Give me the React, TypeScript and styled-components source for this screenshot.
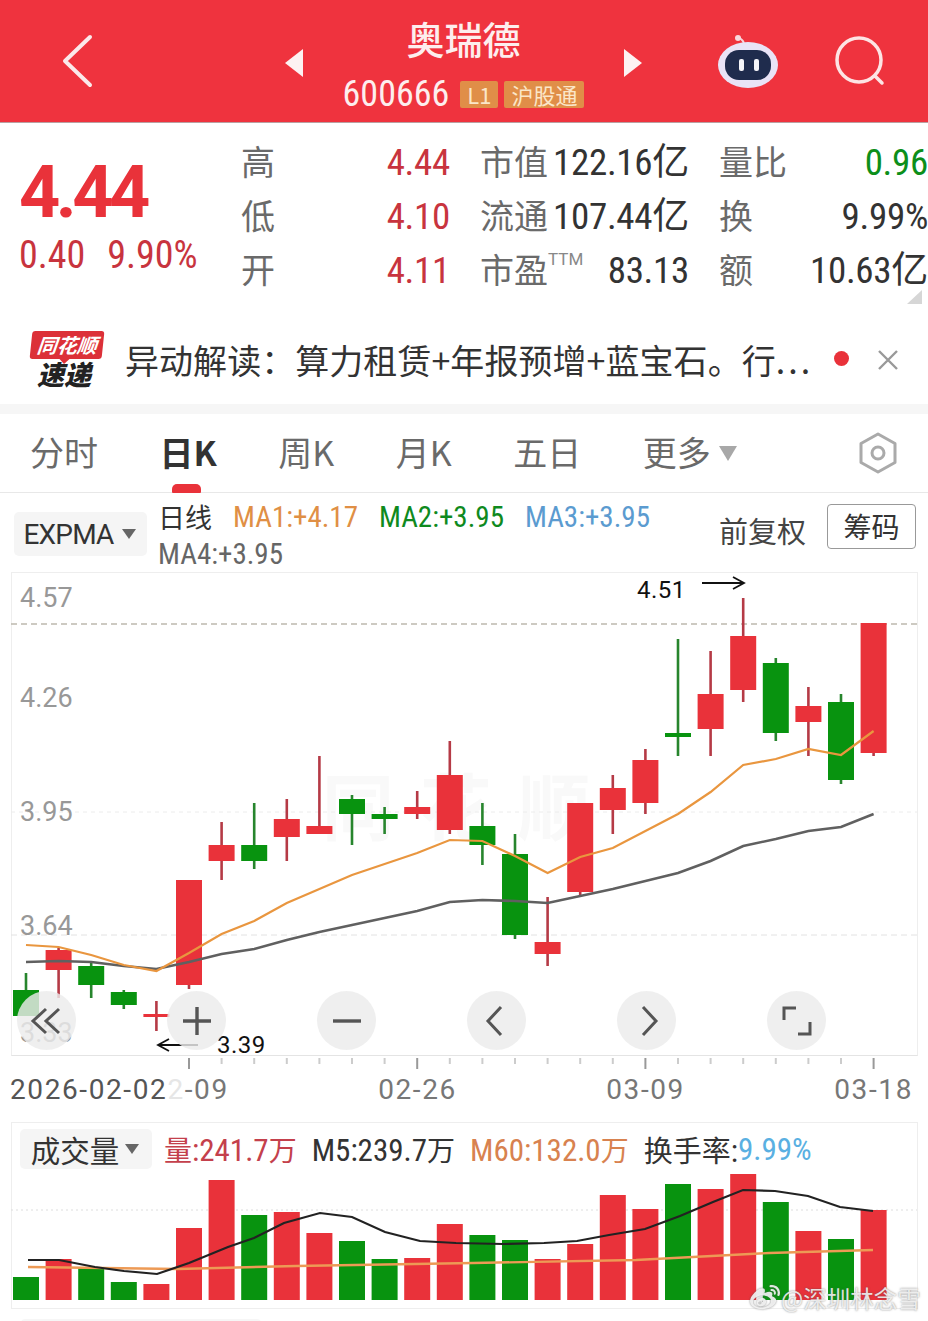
import React from 'react'
import styled, { createGlobalStyle } from 'styled-components'
import { FaWeibo } from 'react-icons/fa'

const CN = `"Noto Sans CJK SC", sans-serif`
const NUM = `Roboto, "Noto Sans CJK SC", sans-serif`

const RED = '#e9323a'
const GREEN = '#08930f'

// wickTop, bodyTop, bodyBottom, wickBottom
const candles: [number, number, number, number, 'r' | 'g'][] = [
    [973, 990, 1016, 1016, 'g'],
    [948, 950, 970, 998, 'r'],
    [963, 966, 985, 998, 'g'],
    [990, 992, 1005, 1009, 'g'],
    [1001, 1014, 1017, 1031, 'r'],
    [880, 880, 985, 989, 'r'],
    [822, 845, 861, 880, 'r'],
    [803, 845, 861, 869, 'g'],
    [799, 819, 837, 861, 'r'],
    [756, 826, 834, 834, 'r'],
    [795, 799, 814, 845, 'g'],
    [807, 814, 819, 834, 'g'],
    [791, 807, 814, 819, 'r'],
    [741, 775, 830, 834, 'r'],
    [803, 826, 845, 865, 'g'],
    [834, 854, 935, 939, 'g'],
    [897, 942, 954, 966, 'r'],
    [803, 803, 892, 896, 'r'],
    [775, 788, 810, 834, 'r'],
    [749, 760, 803, 814, 'r'],
    [639, 733, 737, 756, 'g'],
    [651, 694, 729, 756, 'r'],
    [598, 636, 690, 702, 'r'],
    [658, 663, 733, 741, 'g'],
    [687, 706, 722, 756, 'r'],
    [694, 702, 780, 784, 'g'],
    [623, 623, 753, 756, 'r'],
]

const ma1 = [945, 947, 955, 965, 971, 953, 934, 921, 903, 889, 875, 864, 853, 840, 841, 856, 873, 857, 848, 831, 814, 792, 765, 759, 749, 755, 731]
const ma2 = [962, 961, 962, 966, 969, 962, 954, 949, 940, 932, 925, 918, 911, 902, 900, 901, 903, 896, 889, 881, 873, 861, 846, 839, 831, 827, 814]

const volumes = [1277, 1259, 1267, 1282, 1284, 1228, 1180, 1215, 1212, 1233, 1241, 1259, 1258, 1224, 1235, 1240, 1259, 1244, 1195, 1209, 1184, 1189, 1174, 1202, 1231, 1239, 1210]

const m5 = '28,1260 59,1260 95,1267 124,1271 157,1274 189,1263 228,1247 254,1238 284,1223 320,1213 352,1217 385,1232 420,1241 456,1243 503,1244 544,1243 577,1241 609,1235 645,1229 680,1216 713,1202 743,1190 775,1191 808,1196 840,1207 873,1211'
const m60 = '28,1267 178,1269 296,1266 473,1263 636,1260 769,1253 873,1250'

const xAt = (i: number) => 26 + i * 32.6
const toPoints = (ys: number[]) => ys.map((y, i) => `${xAt(i)},${y}`).join(' ')

const prices = [
    { text: '4.57', top: 10 },
    { text: '4.26', top: 110 },
    { text: '3.95', top: 224 },
    { text: '3.64', top: 338 },
    { text: '3.33', top: 445 },
]

const stats = [
    { label: '高', value: '4.44', tone: '#c8343e' },
    { label: '市值', value: '122.16亿' },
    { label: '量比', value: '0.96', tone: '#0c8f1a' },
    { label: '低', value: '4.10', tone: '#c8343e' },
    { label: '流通', value: '107.44亿' },
    { label: '换', value: '9.99%' },
    { label: '开', value: '4.11', tone: '#c8343e' },
    { label: '市盈', sup: 'TTM', value: '83.13' },
    { label: '额', value: '10.63亿' },
]

const Global = createGlobalStyle`
    html, body {
        margin: 0;
        padding: 0;
        background: #fff;
    }
    * {
        box-sizing: border-box;
    }
`

const Page = styled.div`
    width: 928px;
    height: 1321px;
    overflow: hidden;
    position: relative;
    background: #fff;
    font-family: ${CN};
`

const Header = styled.header`
    height: 123px;
    background: #ef333e;
    border-bottom: 1px solid #b9a0a2;
    display: flex;
    align-items: center;
    padding-left: 62px;
    color: #fdeeee;
`

const BackIcon = styled.svg`
    width: 32px;
    height: 54px;
    margin-right: 191px;
`

const Triangle = styled.div<{ $right?: boolean }>`
    width: 0;
    height: 0;
    margin-top: 3px;
    border-top: 14px solid transparent;
    border-bottom: 14px solid transparent;
    ${(p) => (p.$right ? 'border-left: 18px solid #fdf2f2;' : 'border-right: 18px solid #fdf2f2;')}
`

const HeaderCenter = styled.div`
    width: 321px;
    display: flex;
    flex-direction: column;
    align-items: center;
`

const Title = styled.div`
    font-size: 38px;
    line-height: 44px;
    font-weight: 500;
    margin-top: 2px;
`

const CodeRow = styled.div`
    display: flex;
    align-items: center;
    gap: 6px;
    margin-top: 20px;
    height: 28px;
`

const Code = styled.span`
    font-family: ${NUM};
    font-stretch: 75%;
    font-size: 36px;
    line-height: 28px;
    margin-right: 5px;
`

const Badge = styled.span`
    background: #e08e48;
    color: #fbe6c8;
    font-size: 22px;
    line-height: 27px;
    height: 27px;
    padding: 0 7px;
    border-radius: 2px;
`

const RobotIcon = styled.svg`
    width: 62px;
    height: 56px;
    margin-left: 75px;
    margin-top: 1px;
`

const SearchIcon = styled.svg`
    width: 56px;
    height: 56px;
    margin-left: 53px;
`

const Quote = styled.section`
    height: 200px;
    display: flex;
    position: relative;
`

const PriceCol = styled.div`
    width: 241px;
    padding: 31px 0 0 19px;
`

const BigPrice = styled.div`
    font-family: Roboto, sans-serif;
    font-weight: 700;
    font-size: 72px;
    line-height: 78px;
    letter-spacing: -4.5px;
    color: ${RED};
`

const Change = styled.div`
    display: flex;
    gap: 22px;
    margin-top: 1px;
    font-family: ${NUM};
    font-stretch: 75%;
    font-size: 38px;
    line-height: 44px;
    color: #c8343e;
`

const StatGrid = styled.div`
    display: grid;
    grid-template-columns: repeat(3, 207px);
    grid-auto-rows: 54px;
    column-gap: 32px;
    padding-top: 11px;
`

const Stat = styled.div`
    display: flex;
    justify-content: space-between;
    align-items: center;
    white-space: nowrap;
`

const StatLabel = styled.span`
    font-size: 34px;
    color: #6a6a6a;
    display: flex;
    align-items: flex-start;
    line-height: 44px;
`

const Sup = styled.span`
    font-family: Roboto, sans-serif;
    font-size: 17px;
    line-height: 24px;
    color: #888;
`

const StatValue = styled.span<{ $tone?: string }>`
    font-family: ${NUM};
    font-stretch: 75%;
    font-size: 37px;
    line-height: 44px;
    letter-spacing: -0.3px;
    margin: 4px -2px 0 0;
    color: ${(p) => p.$tone || '#333'};
`

const Corner = styled.div`
    position: absolute;
    left: 907px;
    top: 167px;
    width: 15px;
    height: 14px;
    background: #d6d6d6;
    clip-path: polygon(100% 0, 100% 100%, 0 100%);
`

const News = styled.section`
    height: 81px;
    display: flex;
    align-items: center;
    padding-left: 30px;
    padding-bottom: 7px;
`

const Logo = styled.div`
    width: 74px;
    display: flex;
    flex-direction: column;
    align-items: center;
`

const LogoBubble = styled.div`
    position: relative;
    width: 72px;
    height: 28px;
    background: #dc3038;
    border-radius: 3px;
    transform: skewX(-6deg);
    color: #fff;
    font-size: 20px;
    line-height: 28px;
    font-weight: 700;
    font-style: italic;
    text-align: center;
    white-space: nowrap;
    &::after {
        content: '';
        position: absolute;
        left: 30px;
        bottom: -5px;
        border-left: 5px solid transparent;
        border-right: 5px solid transparent;
        border-top: 5px solid #dc3038;
    }
`

const LogoText = styled.div`
    font-size: 27px;
    line-height: 30px;
    font-weight: 900;
    font-style: italic;
    color: #222;
    margin-right: 6px;
`

const NewsText = styled.div`
    width: 690px;
    margin-left: 21px;
    font-size: 34px;
    line-height: 44px;
    color: #333;
    white-space: nowrap;
    letter-spacing: 0.05px;
`

const Ellipsis = styled.span`
    letter-spacing: 3px;
`

const Dot = styled.div`
    width: 15px;
    height: 15px;
    border-radius: 50%;
    background: ${RED};
    margin-left: 19px;
    margin-top: -3px;
`

const CloseIcon = styled.svg`
    width: 22px;
    height: 22px;
    margin-left: 28px;
`

const Strip = styled.div`
    height: 10px;
    background: #f6f6f6;
`

const Tabs = styled.nav`
    height: 79px;
    display: flex;
    gap: 61.5px;
    align-items: center;
    padding: 0 30px 0 30px;
    border-bottom: 1px solid #e8e8e8;
`

const Tab = styled.div<{ $active?: boolean }>`
    position: relative;
    font-size: 34px;
    line-height: 44px;
    margin-bottom: 2px;
    display: flex;
    align-items: center;
    gap: 5px;
    color: ${(p) => (p.$active ? '#333' : '#6a6a6a')};
    font-weight: ${(p) => (p.$active ? 700 : 400)};
    ${(p) =>
        p.$active &&
        `&::after {
            content: '';
            position: absolute;
            left: 12px;
            width: 29px;
            height: 9px;
            bottom: -19px;
            border-radius: 5px 5px 1px 1px;
            background: ${RED};
        }`}
`

const TabArrow = styled.span`
    width: 0;
    height: 0;
    margin: 3px 0 0 3px;
    border-left: 9px solid transparent;
    border-right: 9px solid transparent;
    border-top: 15px solid #a8a8a8;
`

const GearIcon = styled.svg`
    width: 42px;
    height: 42px;
    margin-left: auto;
    margin-right: -1px;
`

const IndicatorRow = styled.section`
    height: 79px;
    display: flex;
    padding-left: 14px;
`

const Chip = styled.div`
    display: flex;
    align-items: center;
    justify-content: center;
    gap: 8px;
    background: #f5f5f5;
    border-radius: 5px;
    color: #333;
`

const ExpmaChip = styled(Chip)`
    width: 133px;
    height: 44px;
    margin-top: 19px;
    font-family: Roboto, sans-serif;
    font-size: 28px;
    letter-spacing: -0.8px;
    padding-right: 2px;
`

const ChipArrow = styled.span`
    width: 0;
    height: 0;
    border-left: 7px solid transparent;
    border-right: 7px solid transparent;
    border-top: 10px solid #666;
`

const Legend = styled.div`
    width: 540px;
    margin-left: 13px;
    padding-top: 7px;
    display: flex;
    flex-wrap: wrap;
    column-gap: 21px;
    font-family: ${NUM};
    font-stretch: 75%;
    font-size: 29px;
    line-height: 34px;
`

const LegendItem = styled.span<{ $color: string }>`
    color: ${(p) => p.$color};
    position: relative;
    left: -2px;
`

const LegendBreak = styled.div`
    width: 100%;
`

const LegendCn = styled.span`
    font-family: ${CN};
    font-stretch: normal;
    font-size: 27px;
    color: #333;
    position: relative;
    left: -2px;
`

const Adjust = styled.div`
    margin-left: 19px;
    margin-top: 16px;
    font-size: 29px;
    line-height: 42px;
    color: #444;
    white-space: nowrap;
`

const ChipButton = styled.div`
    width: 89px;
    height: 45px;
    margin-left: 21px;
    margin-top: 11px;
    border: 1px solid #999;
    border-radius: 4px;
    font-size: 28px;
    line-height: 42px;
    text-align: center;
    color: #333;
`

const ChartPanel = styled.section`
    position: relative;
    width: 907px;
    height: 484px;
    margin-left: 11px;
    border: 1px solid #eee;
    border-bottom: 1px solid #e4e4e4;
`

const ChartSvg = styled.svg`
    display: block;
    position: absolute;
    left: -1px;
    top: -1px;
`

const PriceLabel = styled.span<{ $top: number }>`
    position: absolute;
    left: 8px;
    top: ${(p) => p.$top}px;
    font-family: Roboto, sans-serif;
    font-size: 27px;
    line-height: 30px;
    color: #989898;
`

const Extreme = styled.span<{ $left: number; $top: number }>`
    position: absolute;
    left: ${(p) => p.$left}px;
    top: ${(p) => p.$top}px;
    font-family: Roboto, sans-serif;
    font-size: 24px;
    line-height: 28px;
    letter-spacing: 0.5px;
    color: #111;
`

const Watermark = styled.span`
    position: absolute;
    left: 310px;
    top: 190px;
    font-size: 72px;
    line-height: 80px;
    letter-spacing: 26px;
    font-weight: 700;
    color: #f9f9f9;
    white-space: nowrap;
`

const ZoomBar = styled.div`
    position: absolute;
    left: 5px;
    top: 418px;
    display: flex;
    gap: 91px;
`

const ZoomButton = styled.div`
    width: 59px;
    height: 59px;
    border-radius: 50%;
    background: rgba(236, 236, 236, 0.82);
    display: flex;
    align-items: center;
    justify-content: center;
`

const ZoomIcon = styled.svg`
    width: 36px;
    height: 36px;
    fill: none;
    stroke: #555;
    stroke-width: 3;
`

const Axis = styled.div`
    height: 49px;
    position: relative;
`

const AxisTicks = styled.svg`
    display: block;
    position: absolute;
    left: 0;
    top: 0;
`

const AxisLabels = styled.div`
    display: flex;
    justify-content: space-between;
    padding: 18px 15px 0 10px;
    font-family: Roboto, sans-serif;
    font-size: 28px;
    line-height: 32px;
    letter-spacing: 1.6px;
    color: #777;
`

const AxisFirst = styled.span`
    color: #555;
`

const Faded = styled.span`
    color: #e6e6e6;
`

const AxisSecond = styled.span`
    color: #777;
`

const VolumePanel = styled.section`
    width: 907px;
    height: 187px;
    margin: 17px 0 0 11px;
    border: 1px solid #eee;
`

const VolumeHead = styled.div`
    display: flex;
    align-items: center;
    height: 47px;
    padding: 5px 0 0 8px;
    font-family: ${NUM};
    font-stretch: 75%;
    font-size: 31px;
    white-space: nowrap;
`

const VolumeChip = styled(Chip)`
    width: 132px;
    height: 40px;
    font-family: ${CN};
    font-stretch: normal;
    font-size: 29.5px;
    margin-right: 12px;
    gap: 6px;
    padding-right: 2px;
`

const VolumeItem = styled.span<{ $color: string; $gap?: number }>`
    color: ${(p) => p.$color};
    margin-right: ${(p) => p.$gap ?? 15}px;
`

const VolumeCn = styled.span`
    font-family: ${CN};
    font-stretch: normal;
    font-size: 28px;
`

const VolumeLabel = styled(VolumeCn)`
    font-size: 29px;
`

const VolumeSvg = styled.svg`
    display: block;
    margin-left: -1px;
`

const FootChip = styled.div`
    width: 240px;
    height: 6px;
    margin: 10px 0 0 21px;
    background: #f6f6f6;
    border-radius: 4px 4px 0 0;
`

const Credit = styled.div`
    position: absolute;
    left: 750px;
    top: 1281px;
    display: flex;
    align-items: center;
    gap: 1px;
    color: rgba(245, 245, 245, 0.9);
    font-size: 23.5px;
    line-height: 34px;
    text-shadow: 0 0 2px rgba(80, 80, 80, 0.7);
    white-space: nowrap;
    svg {
        filter: drop-shadow(0 0 1px rgba(80, 80, 80, 0.7));
    }
`

function ChartDrawing() {
    return (
        <ChartSvg width={907} height={484} viewBox="11 572 907 484">
            <line x1={11} x2={917} y1={624} y2={624} stroke="#bdb9ae" strokeWidth={1.5} strokeDasharray="6 4" />
            <line x1={11} x2={917} y1={812} y2={812} stroke="#ececec" strokeWidth={1} strokeDasharray="4 4" />
            <line x1={11} x2={917} y1={935} y2={935} stroke="#e2e2e2" strokeWidth={1} strokeDasharray="6 4" />
            {candles.map(([wt, bt, bb, wb, c], i) => (
                <g key={i}>
                    <line x1={xAt(i)} x2={xAt(i)} y1={wt} y2={wb} strokeWidth={2.6} stroke={c === 'r' ? '#b53a46' : '#27852d'} />
                    <rect x={xAt(i) - 13} y={bt} width={26} height={bb - bt} fill={c === 'r' ? RED : GREEN} />
                </g>
            ))}
            <polyline points={toPoints(ma2)} fill="none" stroke="#606060" strokeWidth={2.6} />
            <polyline points={toPoints(ma1)} fill="none" stroke="#e9963f" strokeWidth={2.2} />
            <path d="M702 583H744M733 577L744 583L733 589" fill="none" stroke="#111" strokeWidth={1.8} />
            <path d="M198 1045H158M169 1039L158 1045L169 1051" fill="none" stroke="#111" strokeWidth={1.8} />
        </ChartSvg>
    )
}

function AxisDrawing() {
    return (
        <AxisTicks width={928} height={14}>
            {candles.map((_, i) => {
                if (i < 5) return null
                const major = i === 5 || i === 12 || i === 19 || i === 26
                return (
                    <line key={i} x1={xAt(i)} x2={xAt(i)} y1={2} y2={major ? 13 : 8} stroke={major ? '#999' : '#ccc'} strokeWidth={2} />
                )
            })}
        </AxisTicks>
    )
}

function VolumeDrawing() {
    return (
        <VolumeSvg width={907} height={131} viewBox="11 1170 907 131">
            <line x1={11} x2={917} y1={1210} y2={1210} stroke="#ddd" strokeWidth={1} strokeDasharray="2 3" />
            {volumes.map((top, i) => (
                <rect key={i} x={xAt(i) - 13} y={top} width={26} height={1300 - top} fill={candles[i][4] === 'r' ? RED : GREEN} />
            ))}
            <polyline points={m60} fill="none" stroke="#ed9a55" strokeWidth={2.4} />
            <polyline points={m5} fill="none" stroke="#222" strokeWidth={2.2} />
        </VolumeSvg>
    )
}

export default function App() {
    return (
        <Page>
            <Global />
            <Header>
                <BackIcon viewBox="0 0 32 54">
                    <path d="M28 3L3 27L28 51" fill="none" stroke="#fbe9ea" strokeWidth={4} strokeLinecap="round" strokeLinejoin="round" />
                </BackIcon>
                <Triangle />
                <HeaderCenter>
                    <Title>奥瑞德</Title>
                    <CodeRow>
                        <Code>600666</Code>
                        <Badge>L1</Badge>
                        <Badge>沪股通</Badge>
                    </CodeRow>
                </HeaderCenter>
                <Triangle $right />
                <RobotIcon viewBox="0 0 62 56">
                    <path d="M27 9C25 5 23 4 21 4" fill="none" stroke="#f6d4dc" strokeWidth={2} />
                    <circle cx={21} cy={4} r={3} fill="#f8d9de" />
                    <ellipse cx={31} cy={31} rx={30} ry={23} fill="#e9e3f6" />
                    <rect x={8} y={16} width={46} height={30} rx={14} fill="#1f2c4d" />
                    <rect x={22} y={25} width={5} height={12} rx={2} fill="#f4f4f8" />
                    <rect x={37} y={25} width={5} height={12} rx={2} fill="#f4f4f8" />
                </RobotIcon>
                <SearchIcon viewBox="0 0 56 56">
                    <circle cx={27} cy={27} r={22} fill="none" stroke="#fde4e4" strokeWidth={3.5} />
                    <path d="M43 43L50 50" stroke="#fde4e4" strokeWidth={3.5} strokeLinecap="round" />
                </SearchIcon>
            </Header>

            <Quote>
                <PriceCol>
                    <BigPrice>4.44</BigPrice>
                    <Change>
                        <span>0.40</span>
                        <span>9.90%</span>
                    </Change>
                </PriceCol>
                <StatGrid>
                    {stats.map((s) => (
                        <Stat key={s.label}>
                            <StatLabel>
                                {s.label}
                                {s.sup && <Sup>{s.sup}</Sup>}
                            </StatLabel>
                            <StatValue $tone={s.tone}>{s.value}</StatValue>
                        </Stat>
                    ))}
                </StatGrid>
                <Corner />
            </Quote>

            <News>
                <Logo>
                    <LogoBubble>同花顺</LogoBubble>
                    <LogoText>速递</LogoText>
                </Logo>
                <NewsText>
                    异动解读：算力租赁+年报预增+蓝宝石。行<Ellipsis>...</Ellipsis>
                </NewsText>
                <Dot />
                <CloseIcon viewBox="0 0 22 22">
                    <path d="M2 2L20 20M20 2L2 20" stroke="#999" strokeWidth={2.4} />
                </CloseIcon>
            </News>
            <Strip />

            <Tabs>
                <Tab>分时</Tab>
                <Tab $active>日K</Tab>
                <Tab>周K</Tab>
                <Tab>月K</Tab>
                <Tab>五日</Tab>
                <Tab>
                    更多
                    <TabArrow />
                </Tab>
                <GearIcon viewBox="0 0 42 42">
                    <path d="M21 2L38 11.5V30.5L21 40L4 30.5V11.5Z" fill="none" stroke="#aaa" strokeWidth={3} strokeLinejoin="round" />
                    <circle cx={21} cy={21} r={6} fill="none" stroke="#aaa" strokeWidth={3} />
                </GearIcon>
            </Tabs>

            <IndicatorRow>
                <ExpmaChip>
                    EXPMA
                    <ChipArrow />
                </ExpmaChip>
                <Legend>
                    <LegendCn>日线</LegendCn>
                    <LegendItem $color="#e08f45">MA1:+4.17</LegendItem>
                    <LegendItem $color="#0f8a1e">MA2:+3.95</LegendItem>
                    <LegendItem $color="#5b9bd0">MA3:+3.95</LegendItem>
                    <LegendBreak />
                    <LegendItem $color="#666">MA4:+3.95</LegendItem>
                </Legend>
                <Adjust>前复权</Adjust>
                <ChipButton>筹码</ChipButton>
            </IndicatorRow>

            <ChartPanel>
                <Watermark>同花顺</Watermark>
                <ChartDrawing />
                {prices.map((p) => (
                    <PriceLabel key={p.text} $top={p.top}>
                        {p.text}
                    </PriceLabel>
                ))}
                <Extreme $left={625} $top={3}>4.51</Extreme>
                <Extreme $left={205} $top={458}>3.39</Extreme>
                <ZoomBar>
                    <ZoomButton>
                        <ZoomIcon viewBox="0 0 36 36">
                            <path d="M17 6L4 18L17 30M30 6L17 18L30 30" />
                        </ZoomIcon>
                    </ZoomButton>
                    <ZoomButton>
                        <ZoomIcon viewBox="0 0 36 36">
                            <path d="M18 4V32M4 18H32" strokeWidth={3.4} />
                        </ZoomIcon>
                    </ZoomButton>
                    <ZoomButton>
                        <ZoomIcon viewBox="0 0 36 36">
                            <path d="M4 18H32" strokeWidth={3.4} />
                        </ZoomIcon>
                    </ZoomButton>
                    <ZoomButton>
                        <ZoomIcon viewBox="0 0 36 36">
                            <path d="M22 4L9 18L22 32" />
                        </ZoomIcon>
                    </ZoomButton>
                    <ZoomButton>
                        <ZoomIcon viewBox="0 0 36 36">
                            <path d="M14 4L27 18L14 32" />
                        </ZoomIcon>
                    </ZoomButton>
                    <ZoomButton>
                        <ZoomIcon viewBox="0 0 36 36">
                            <path d="M5 17V5H17M31 19V31H19" />
                        </ZoomIcon>
                    </ZoomButton>
                </ZoomBar>
            </ChartPanel>

            <Axis>
                <AxisDrawing />
                <AxisLabels>
                    <AxisFirst>
                        2026-02-02
                        <Faded>2</Faded>
                        <AxisSecond>-09</AxisSecond>
                    </AxisFirst>
                    <span>02-26</span>
                    <span>03-09</span>
                    <span>03-18</span>
                </AxisLabels>
            </Axis>

            <VolumePanel>
                <VolumeHead>
                    <VolumeChip>
                        成交量
                        <ChipArrow />
                    </VolumeChip>
                    <VolumeItem $color="#c4404c">
                        <VolumeCn>量</VolumeCn>:241.7<VolumeCn>万</VolumeCn>
                    </VolumeItem>
                    <VolumeItem $color="#333">
                        M5:239.7<VolumeCn>万</VolumeCn>
                    </VolumeItem>
                    <VolumeItem $color="#d8824f">
                        M60:132.0<VolumeCn>万</VolumeCn>
                    </VolumeItem>
                    <VolumeItem $color="#333" $gap={0}>
                        <VolumeLabel>换手率</VolumeLabel>:
                    </VolumeItem>
                    <VolumeItem $color="#5ab0e2" $gap={0}>
                        9.99%
                    </VolumeItem>
                </VolumeHead>
                <VolumeDrawing />
            </VolumePanel>
            <FootChip />

            <Credit>
                <FaWeibo size={30} />
                <span>@深圳林念雪</span>
            </Credit>
        </Page>
    )
}
